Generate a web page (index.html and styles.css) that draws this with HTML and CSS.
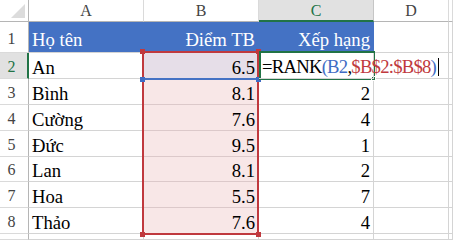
FILE: index.html
```html
<!DOCTYPE html>
<html>
<head>
<meta charset="utf-8">
<link rel="stylesheet" href="styles.css">
</head>
<body>
<div class="sheet">
  <div class="corner"><svg class="tri" width="16" height="16" viewBox="0 0 16 16"><polygon points="1,15 15,15 15,1" fill="#dcdcdc"/></svg></div>
  <div class="ch">A</div>
  <div class="ch">B</div>
  <div class="ch sel">C</div>
  <div class="ch">D</div>
  <div class="ch end"></div>

  <div class="rh r1">1</div>
  <div class="c hd l">Họ tên</div>
  <div class="c hd r">Điểm TB</div>
  <div class="c hd r">Xếp hạng</div>
  <div class="c r1"></div>
  <div class="c r1 end"></div>

  <div class="rh sel">2</div>
  <div class="c l">An</div>
  <div class="c r b2">6.5</div>
  <div class="c l fx"><span class="k">=RANK</span><span class="bl">(B2</span><span class="k">,</span><span class="rd">$B$2:$B$8</span><span class="bl">)</span><span class="caret"></span></div>
  <div class="c"></div>
  <div class="c end"></div>

  <div class="rh">3</div>
  <div class="c l">Bình</div>
  <div class="c r bx">8.1</div>
  <div class="c r">2</div>
  <div class="c"></div>
  <div class="c end"></div>

  <div class="rh">4</div>
  <div class="c l">Cường</div>
  <div class="c r bx">7.6</div>
  <div class="c r">4</div>
  <div class="c"></div>
  <div class="c end"></div>

  <div class="rh">5</div>
  <div class="c l">Đức</div>
  <div class="c r bx">9.5</div>
  <div class="c r">1</div>
  <div class="c"></div>
  <div class="c end"></div>

  <div class="rh">6</div>
  <div class="c l">Lan</div>
  <div class="c r bx">8.1</div>
  <div class="c r">2</div>
  <div class="c"></div>
  <div class="c end"></div>

  <div class="rh">7</div>
  <div class="c l">Hoa</div>
  <div class="c r bx">5.5</div>
  <div class="c r">7</div>
  <div class="c"></div>
  <div class="c end"></div>

  <div class="rh">8</div>
  <div class="c l">Thảo</div>
  <div class="c r bx">7.6</div>
  <div class="c r">4</div>
  <div class="c"></div>
  <div class="c end"></div>

  <div class="rh"></div>
  <div class="c"></div>
  <div class="c"></div>
  <div class="c"></div>
  <div class="c"></div>
  <div class="c end"></div>

  <div class="ref-blue"></div>
  <div class="ref-red"></div>
  <div class="hdl red h-tl"></div>
  <div class="hdl red h-tr"></div>
  <div class="hdl red h-bl"></div>
  <div class="hdl red h-br"></div>
  <div class="hdl blue h-ml"></div>
  <div class="hdl blue h-mr"></div>
  <div class="active"></div>
  <div class="fill-handle"></div>
</div>
</body>
</html>
```
FILE: styles.css
```css
html, body {
  margin: 0;
  padding: 0;
  background: #ffffff;
}
.sheet {
  position: relative;
  width: 453px;
  height: 240px;
  overflow: hidden;
  display: grid;
  grid-template-columns: 29px 115px 115px 115px 75px 1fr;
  grid-template-rows: 22px 31px 26px 26px 26px 26px 25px 26px 26px 1fr;
  font-family: "Liberation Serif", "Times New Roman", serif;
  background: #ffffff;
}
.sheet > div {
  box-sizing: border-box;
}
.corner {
  border-right: 1px solid #b5b5b5;
  border-bottom: 1px solid #b5b5b5;
  position: relative;
}
.tri {
  position: absolute;
  right: 2px;
  bottom: 2px;
}
.ch {
  border-right: 1px solid #dadada;
  border-bottom: 1px solid #b5b5b5;
  color: #444444;
  font-size: 16px;
  display: flex;
  align-items: center;
  justify-content: center;
  padding-top: 1px;
}
.ch.sel {
  background: #e1e1e1;
  color: #217346;
  border-bottom: 2px solid #217346;
  border-right-color: #c6c6c6;
}
.rh {
  border-right: 1px solid #b5b5b5;
  border-bottom: 1px solid #dadada;
  color: #444444;
  font-size: 16px;
  display: flex;
  align-items: center;
  justify-content: center;
  padding-right: 5px;
  padding-top: 2px;
}
.rh.sel {
  background: #e1e1e1;
  color: #217346;
  border-right: 2px solid #217346;
  padding-right: 4px;
}
.rh.r1 {
  padding-top: 4px;
}
.c {
  border-right: 1px solid #d4d4d4;
  border-bottom: 1px solid #d4d4d4;
  font-size: 18.67px;
  line-height: 20px;
  color: #000000;
  display: flex;
  align-items: flex-end;
  white-space: nowrap;
}
.c.l {
  justify-content: flex-start;
  padding-left: 3px;
}
.c.r {
  justify-content: flex-end;
  padding-right: 3px;
}
.c.hd {
  background: #4472c4;
  color: #ffffff;
  border-right-color: #4472c4;
  padding-bottom: 2px;
}
.c.b2 {
  background: #e6dee8;
}
.c.bx {
  background: #f8e7e7;
  border-bottom-color: #dcc9ca;
}
.c.fx {
  padding-left: 3px;
  overflow: visible;
  position: relative;
  z-index: 1;
  letter-spacing: -0.75px;
  align-items: center;
  padding-top: 3px;
}
.k { color: #000000; }
.bl { color: #3f6cc4; }
.rd { color: #c0393e; }
.caret {
  display: block;
  flex: none;
  width: 1px;
  height: 18px;
  background: #000000;
  margin-left: 2px;
}
.ref-blue {
  position: absolute;
  left: 142px;
  top: 51px;
  width: 117px;
  height: 29px;
  border: 2px solid #4472c4;
}
.ref-red {
  position: absolute;
  left: 142px;
  top: 51px;
  width: 117px;
  height: 184px;
  border: 2px solid #c0393e;
}
.hdl {
  position: absolute;
  width: 5px;
  height: 5px;
}
.hdl.red { background: #c0393e; }
.hdl.blue { background: #3f6cc4; }
.h-tl { left: 140px; top: 49px; }
.h-tr { left: 256px; top: 49px; }
.h-bl { left: 140px; top: 232px; }
.h-br { left: 256px; top: 232px; }
.h-ml { left: 140px; top: 77px; }
.h-mr { left: 256px; top: 77px; }
.active {
  position: absolute;
  left: 259px;
  top: 51px;
  width: 116px;
  height: 29px;
  border: 2px solid #217346;
}
.fill-handle {
  position: absolute;
  left: 371px;
  top: 76px;
  width: 5px;
  height: 5px;
  background: #217346;
  border: 1px solid #ffffff;
}
```
